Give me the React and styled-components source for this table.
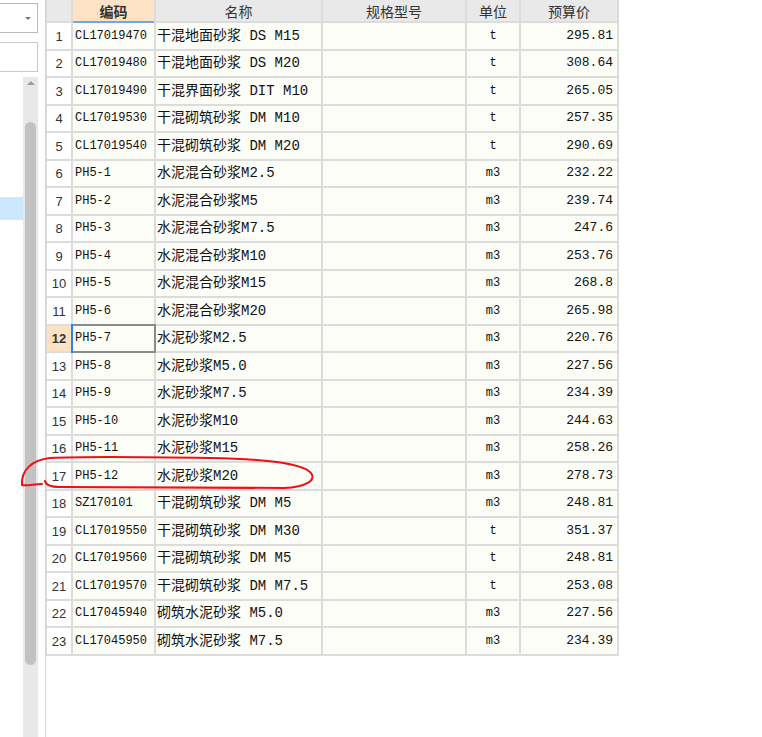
import React from "react";
import styled, { createGlobalStyle } from "styled-components";

const Global = createGlobalStyle`
  html, body { margin: 0; padding: 0; background: #fff; }
  body { font-family: "Liberation Sans", "Noto Sans CJK SC", sans-serif; }
`;

const rows = [
  ["CL17019470", "干混地面砂浆 DS M15", "t", "295.81"],
  ["CL17019480", "干混地面砂浆 DS M20", "t", "308.64"],
  ["CL17019490", "干混界面砂浆 DIT M10", "t", "265.05"],
  ["CL17019530", "干混砌筑砂浆 DM M10", "t", "257.35"],
  ["CL17019540", "干混砌筑砂浆 DM M20", "t", "290.69"],
  ["PH5-1", "水泥混合砂浆M2.5", "m3", "232.22"],
  ["PH5-2", "水泥混合砂浆M5", "m3", "239.74"],
  ["PH5-3", "水泥混合砂浆M7.5", "m3", "247.6"],
  ["PH5-4", "水泥混合砂浆M10", "m3", "253.76"],
  ["PH5-5", "水泥混合砂浆M15", "m3", "268.8"],
  ["PH5-6", "水泥混合砂浆M20", "m3", "265.98"],
  ["PH5-7", "水泥砂浆M2.5", "m3", "220.76"],
  ["PH5-8", "水泥砂浆M5.0", "m3", "227.56"],
  ["PH5-9", "水泥砂浆M7.5", "m3", "234.39"],
  ["PH5-10", "水泥砂浆M10", "m3", "244.63"],
  ["PH5-11", "水泥砂浆M15", "m3", "258.26"],
  ["PH5-12", "水泥砂浆M20", "m3", "278.73"],
  ["SZ170101", "干混砌筑砂浆 DM M5", "m3", "248.81"],
  ["CL17019550", "干混砌筑砂浆 DM M30", "t", "351.37"],
  ["CL17019560", "干混砌筑砂浆 DM M5", "t", "248.81"],
  ["CL17019570", "干混砌筑砂浆 DM M7.5", "t", "253.08"],
  ["CL17045940", "砌筑水泥砂浆 M5.0", "m3", "227.56"],
  ["CL17045950", "砌筑水泥砂浆 M7.5", "m3", "234.39"],
];

const Page = styled.div`
  position: relative;
  display: flex;
  width: 762px;
  height: 737px;
  overflow: hidden;
`;

const Side = styled.div`
  width: 38px;
  display: flex;
  flex-direction: column;
  flex-shrink: 0;
`;

const Combo = styled.div`
  margin-top: 3px;
  height: 30px;
  box-sizing: border-box;
  border: 1px solid #b9b9b9;
  border-left: none;
  background: #fff;
  display: flex;
  align-items: center;
  justify-content: flex-end;
  padding-right: 6px;
`;

const Caret = styled.div`
  width: 0;
  height: 0;
  border-left: 3px solid transparent;
  border-right: 3px solid transparent;
  border-top: 3px solid #7a7a7a;
`;

const Field = styled.div`
  margin-top: 9px;
  height: 30px;
  box-sizing: border-box;
  border: 1px solid #c9c9c9;
  border-left: none;
  background: #fff;
`;

const ListArea = styled.div`
  margin-top: 5px;
  flex: 1;
  display: flex;
`;

const List = styled.div`
  flex: 1;
  padding-top: 120px;
`;

const Selected = styled.div`
  height: 23px;
  background: #cce8ff;
`;

const Track = styled.div`
  width: 15px;
  background: #e8e8e8;
  display: flex;
  flex-direction: column;
  align-items: center;
`;

const UpArrow = styled.div`
  margin-top: 4px;
  width: 0;
  height: 0;
  border-left: 4px solid transparent;
  border-right: 4px solid transparent;
  border-bottom: 4px solid #9c9c9c;
`;

const Thumb = styled.div`
  margin-top: 37px;
  width: 11px;
  height: 543px;
  border-radius: 6px;
  background: #c2c2c2;
`;

const Main = styled.div`
  margin-left: 7px;
  flex: 1;
  border-left: 1px solid #d4d4d4;
  display: flex;
  align-items: flex-start;
`;

const Grid = styled.div`
  display: grid;
  grid-template-columns: 24px 81px 165px 142px 52px 96px;
  grid-template-rows: 21px repeat(23, 25.5px);
  gap: 2px;
  padding: 0 2px 2px 1px;
  background: #dcdcdc;
`;

const Head = styled.div`
  display: flex;
  align-items: center;
  justify-content: center;
  background: ${(p) => (p.$active ? "#fde3c4" : "#e9e9e9")};
  color: #333;
  font-family: "Noto Sans CJK SC", sans-serif;
  font-size: 14px;
  line-height: 14px;
  font-weight: ${(p) => (p.$active ? 700 : 400)};
  box-shadow: ${(p) => (p.$active ? "0 2px 0 #6fa8e6" : "none")};
  position: relative;
  z-index: ${(p) => (p.$active ? 1 : 0)};
`;

const Num = styled.div`
  display: flex;
  align-items: center;
  justify-content: center;
  background: ${(p) => (p.$active ? "#fde3c4" : "#fff")};
  color: #333;
  font-family: "Liberation Sans", Arial, sans-serif;
  font-size: 13px;
  line-height: 14px;
  padding-top: 2px;
  font-weight: ${(p) => (p.$active ? 700 : 400)};
`;

const Cell = styled.div`
  position: relative;
  display: flex;
  align-items: center;
  justify-content: ${(p) => p.$justify || "flex-start"};
  padding: ${(p) => p.$pad || "0 2px"};
  background: #fdfdf8;
  color: #111;
  font-family: "Liberation Mono", "Noto Sans CJK SC", monospace;
  font-size: ${(p) => p.$size || 12}px;
  line-height: 14px;
  white-space: nowrap;
  ${(p) =>
    p.$selected &&
    `
    outline: 2px solid #8a8a8a;
    z-index: 2;
    &::before {
      content: "";
      position: absolute;
      left: -2px;
      top: -2px;
      bottom: -2px;
      width: 2px;
      background: #2f80e8;
    }
  `}
`;

const Mark = styled.svg`
  position: absolute;
  left: 0;
  top: 0;
  pointer-events: none;
  z-index: 5;
`;

export default function App() {
  return (
    <>
      <Global />
      <Page>
        <Side>
          <Combo>
            <Caret />
          </Combo>
          <Field />
          <ListArea>
            <List>
              <Selected />
            </List>
            <Track>
              <UpArrow />
              <Thumb />
            </Track>
          </ListArea>
        </Side>
        <Main>
          <Grid>
            <Head />
            <Head $active>编码</Head>
            <Head>名称</Head>
            <Head>规格型号</Head>
            <Head>单位</Head>
            <Head>预算价</Head>
            {rows.map((r, i) => {
              const active = i === 11;
              return (
                <React.Fragment key={i}>
                  <Num $active={active}>{i + 1}</Num>
                  <Cell $selected={active}>{r[0]}</Cell>
                  <Cell $size={14} $pad="0 1px">{r[1]}</Cell>
                  <Cell />
                  <Cell $justify="center">{r[2]}</Cell>
                  <Cell $justify="flex-end" $pad="0 4px" $size={13}>
                    {r[3]}
                  </Cell>
                </React.Fragment>
              );
            })}
          </Grid>
        </Main>
        <Mark width="762" height="737" viewBox="0 0 762 737">
          <path
            d="M 50 458 C 90 456, 150 457, 210 458 C 265 459, 300 463, 310 472 C 318 480, 306 487, 284 488 L 60 487 C 52 487, 46 486, 45 481"
            fill="none"
            stroke="#f01010"
            strokeWidth="2"
            strokeLinecap="round"
          />
          <path
            d="M 50 458 C 32 460, 21 470, 22 485 C 28 486, 34 484, 42 484"
            fill="none"
            stroke="#f01010"
            strokeWidth="2"
            strokeLinecap="round"
          />
        </Mark>
      </Page>
    </>
  );
}
